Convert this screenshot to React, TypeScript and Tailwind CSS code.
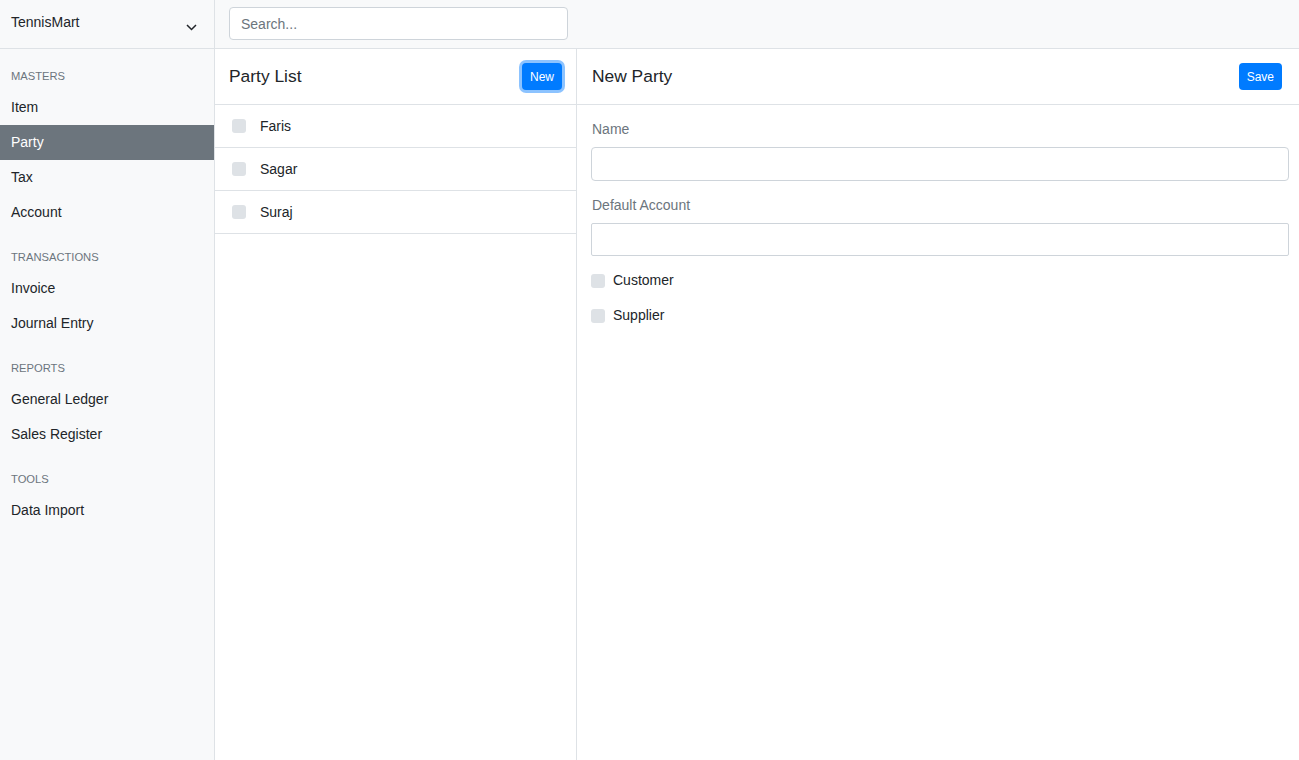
import { useState } from "react";

const sections = [
  { title: "Masters", items: ["Item", "Party", "Tax", "Account"] },
  { title: "Transactions", items: ["Invoice", "Journal Entry"] },
  { title: "Reports", items: ["General Ledger", "Sales Register"] },
  { title: "Tools", items: ["Data Import"] },
];

const parties = ["Faris", "Sagar", "Suraj"];

function Checkbox() {
  return <span className="inline-block h-[14px] w-[14px] shrink-0 rounded-[3px] bg-[#dee2e6]" />;
}

function Sidebar({ active }: { active: string }) {
  return (
    <aside className="flex w-[215px] shrink-0 flex-col border-r border-[#dee2e6] bg-[#f8f9fa]">
      <div className="flex h-[49px] items-center justify-between border-b border-[#dee2e6] pl-[11px] pr-[17px]">
        <span className="-mt-[3px] text-[14px]">TennisMart</span>
        <svg width="11" height="7" viewBox="0 0 11 7" className="mt-[6px]">
          <polyline points="1,1 5.5,5.5 10,1" fill="none" stroke="#212529" strokeWidth="1.5" />
        </svg>
      </div>
      <nav>
        {sections.map((s) => (
          <div key={s.title}>
            <div className="mb-[5px] mt-[19px] h-[17px] px-[11px] text-[11.2px] uppercase leading-[17px] text-[#6c757d]">
              {s.title}
            </div>
            {s.items.map((item) => (
              <div
                key={item}
                className={
                  "flex h-[35px] items-center px-[11px] text-[14px] " +
                  (item === active ? "bg-[#6c757d] text-white" : "")
                }
              >
                {item}
              </div>
            ))}
          </div>
        ))}
      </nav>
    </aside>
  );
}

export default function App() {
  const [active] = useState("Party");

  return (
    <div className="flex h-[760px] w-full overflow-hidden bg-white font-['Liberation_Sans',Arial,sans-serif] text-[#212529]">
      <Sidebar active={active} />
      <div className="flex min-w-0 flex-1 flex-col">
        <div className="flex h-[49px] shrink-0 items-start border-b border-[#dee2e6] bg-[#f8f9fa] pl-[14px] pt-[7px]">
          <input
            placeholder="Search..."
            className="h-[33px] w-[339px] rounded-[4px] border border-[#ced4da] bg-white px-[11px] text-[14px] outline-none placeholder:text-[#6c757d]"
          />
        </div>
        <div className="flex min-h-0 flex-1">
          {/* party list */}
          <section className="flex w-[362px] shrink-0 flex-col border-r border-[#dee2e6]">
            <div className="flex h-[56px] items-center justify-between border-b border-[#dee2e6] pl-[14px] pr-[14px]">
              <h2 className="text-[17.4px]">Party List</h2>
              <button className="h-[27px] rounded-[4px] bg-[#007bff] px-[8px] text-[12px] text-white shadow-[0_0_0_3px_rgba(0,123,255,0.45)]">
                New
              </button>
            </div>
            {parties.map((p) => (
              <div key={p} className="flex h-[43px] items-center gap-[14px] border-b border-[#dee2e6] pl-[17px] text-[14px]">
                <Checkbox />
                <span>{p}</span>
              </div>
            ))}
          </section>

          {/* form */}
          <section className="flex min-w-0 flex-1 flex-col">
            <div className="flex h-[56px] items-center justify-between border-b border-[#dee2e6] pl-[15px] pr-[17px]">
              <h2 className="text-[17.4px]">New Party</h2>
              <button className="h-[27px] rounded-[4px] bg-[#007bff] px-[8px] text-[12px] text-white">Save</button>
            </div>
            <div className="pl-[14px] pr-[10px] pt-[14px] text-[14px]">
              <label className="ml-[1px] block leading-[21px] text-[#6c757d]">Name</label>
              <input className="mt-[7px] block h-[34px] w-full rounded-[4px] border border-[#ced4da] outline-none" />
              <label className="ml-[1px] mt-[14px] block leading-[21px] text-[#6c757d]">Default Account</label>
              <input className="mt-[7px] block h-[33px] w-full rounded-[2px] border border-[#ced4da] outline-none" />
              <div className="mt-[7px]">
                {["Customer", "Supplier"].map((c) => (
                  <div key={c} className="flex h-[35px] items-center gap-[8px]">
                    <Checkbox />
                    <span>{c}</span>
                  </div>
                ))}
              </div>
            </div>
          </section>
        </div>
      </div>
    </div>
  );
}
